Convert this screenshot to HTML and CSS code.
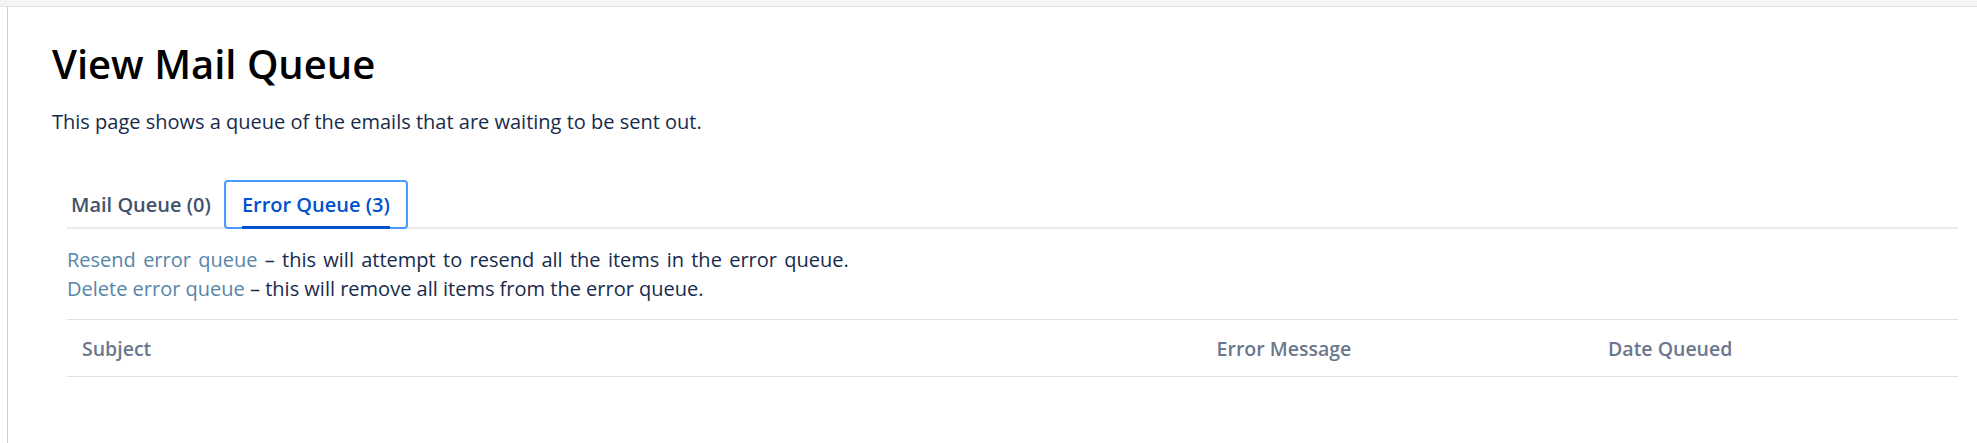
FILE: index.html
```html
<!DOCTYPE html>
<html lang="en">
<head>
<meta charset="utf-8">
<title>View Mail Queue</title>
<link rel="stylesheet" href="styles.css">
</head>
<body>
<div class="topbar"></div>
<div class="layout">
  <aside class="sidebar"></aside>
  <main class="content">
    <h1 class="page-title">View Mail Queue</h1>
    <p class="intro">This page shows a queue of the emails that are waiting to be sent out.</p>
    <section class="queue">
      <nav class="tabs">
        <a class="tab" href="#"><span class="tab-label">Mail Queue (0)</span></a>
        <a class="tab tab-active" href="#"><span class="tab-label">Error Queue (3)</span></a>
      </nav>
      <div class="actions">
        <div class="action action-wide"><a class="action-link" href="#">Resend error queue</a> – this will attempt to resend all the items in the error queue.</div>
        <div class="action"><a class="action-link" href="#">Delete error queue</a> – this will remove all items from the error queue.</div>
      </div>
      <table class="queue-table">
        <thead>
          <tr>
            <th class="col-subject">Subject</th>
            <th class="col-error">Error Message</th>
            <th class="col-date">Date Queued</th>
          </tr>
        </thead>
        <tbody></tbody>
      </table>
    </section>
  </main>
</div>
</body>
</html>
```

FILE: styles.css
```css
html, body {
  margin: 0;
  padding: 0;
  background: #ffffff;
}

body {
  font-family: "Open Sans", "Noto Sans", sans-serif;
  color: #172b4d;
}

.topbar {
  height: 6px;
  background: #f4f4f4;
  border-bottom: 1px solid #e1dfe8;
}

.layout {
  display: flex;
  min-height: 436px;
}

.sidebar {
  width: 7px;
  flex: none;
  border-right: 1px solid #cfcfcf;
}

.content {
  flex: 1;
  padding: 31px 19px 0 44px;
}

.page-title {
  margin: 0;
  font-size: 40px;
  line-height: 52px;
  font-weight: 600;
  color: #000000;
}

.intro {
  margin: 18px 0 0;
  font-size: 20px;
  line-height: 28px;
}

.queue {
  margin-top: 44px;
  padding-left: 15px;
}

.tabs {
  display: flex;
  align-items: flex-end;
  border-bottom: 2px solid #ebecf0;
}

.tab {
  position: relative;
  display: block;
  box-sizing: border-box;
  height: 49px;
  margin-bottom: -2px;
  padding: 1px 2px 0;
  border: 2px solid transparent;
  border-radius: 4px;
  text-decoration: none;
  color: #42526e;
  font-size: 20px;
  font-weight: 600;
}

.tab-label {
  display: block;
  line-height: 44px;
}

.tab-active {
  margin-left: 9px;
  padding: 1px 16px 0;
  color: #0052cc;
  border-color: #4c9aff;
}

.tab-active::after {
  content: "";
  position: absolute;
  left: 16px;
  right: 16px;
  bottom: -2px;
  height: 3px;
  background: #0052cc;
}

.actions {
  padding-top: 16px;
  font-size: 20px;
  line-height: 29px;
}

.action-wide {
  word-spacing: 2.1px;
}

.action-link {
  color: #5885a8;
  text-decoration: none;
}

.queue-table {
  width: 100%;
  margin-top: 16px;
  border-collapse: collapse;
}

.queue-table th {
  text-align: left;
  vertical-align: middle;
  font-size: 19.5px;
  font-weight: 600;
  color: #6b778c;
  padding: 0 15px;
  height: 56px;
  border-top: 1px solid #dfe1e6;
  border-bottom: 1px solid #dfe1e6;
}

.col-subject { width: 60%; }
.col-error { width: 20.7%; }
.col-date { width: 19.3%; }
```
